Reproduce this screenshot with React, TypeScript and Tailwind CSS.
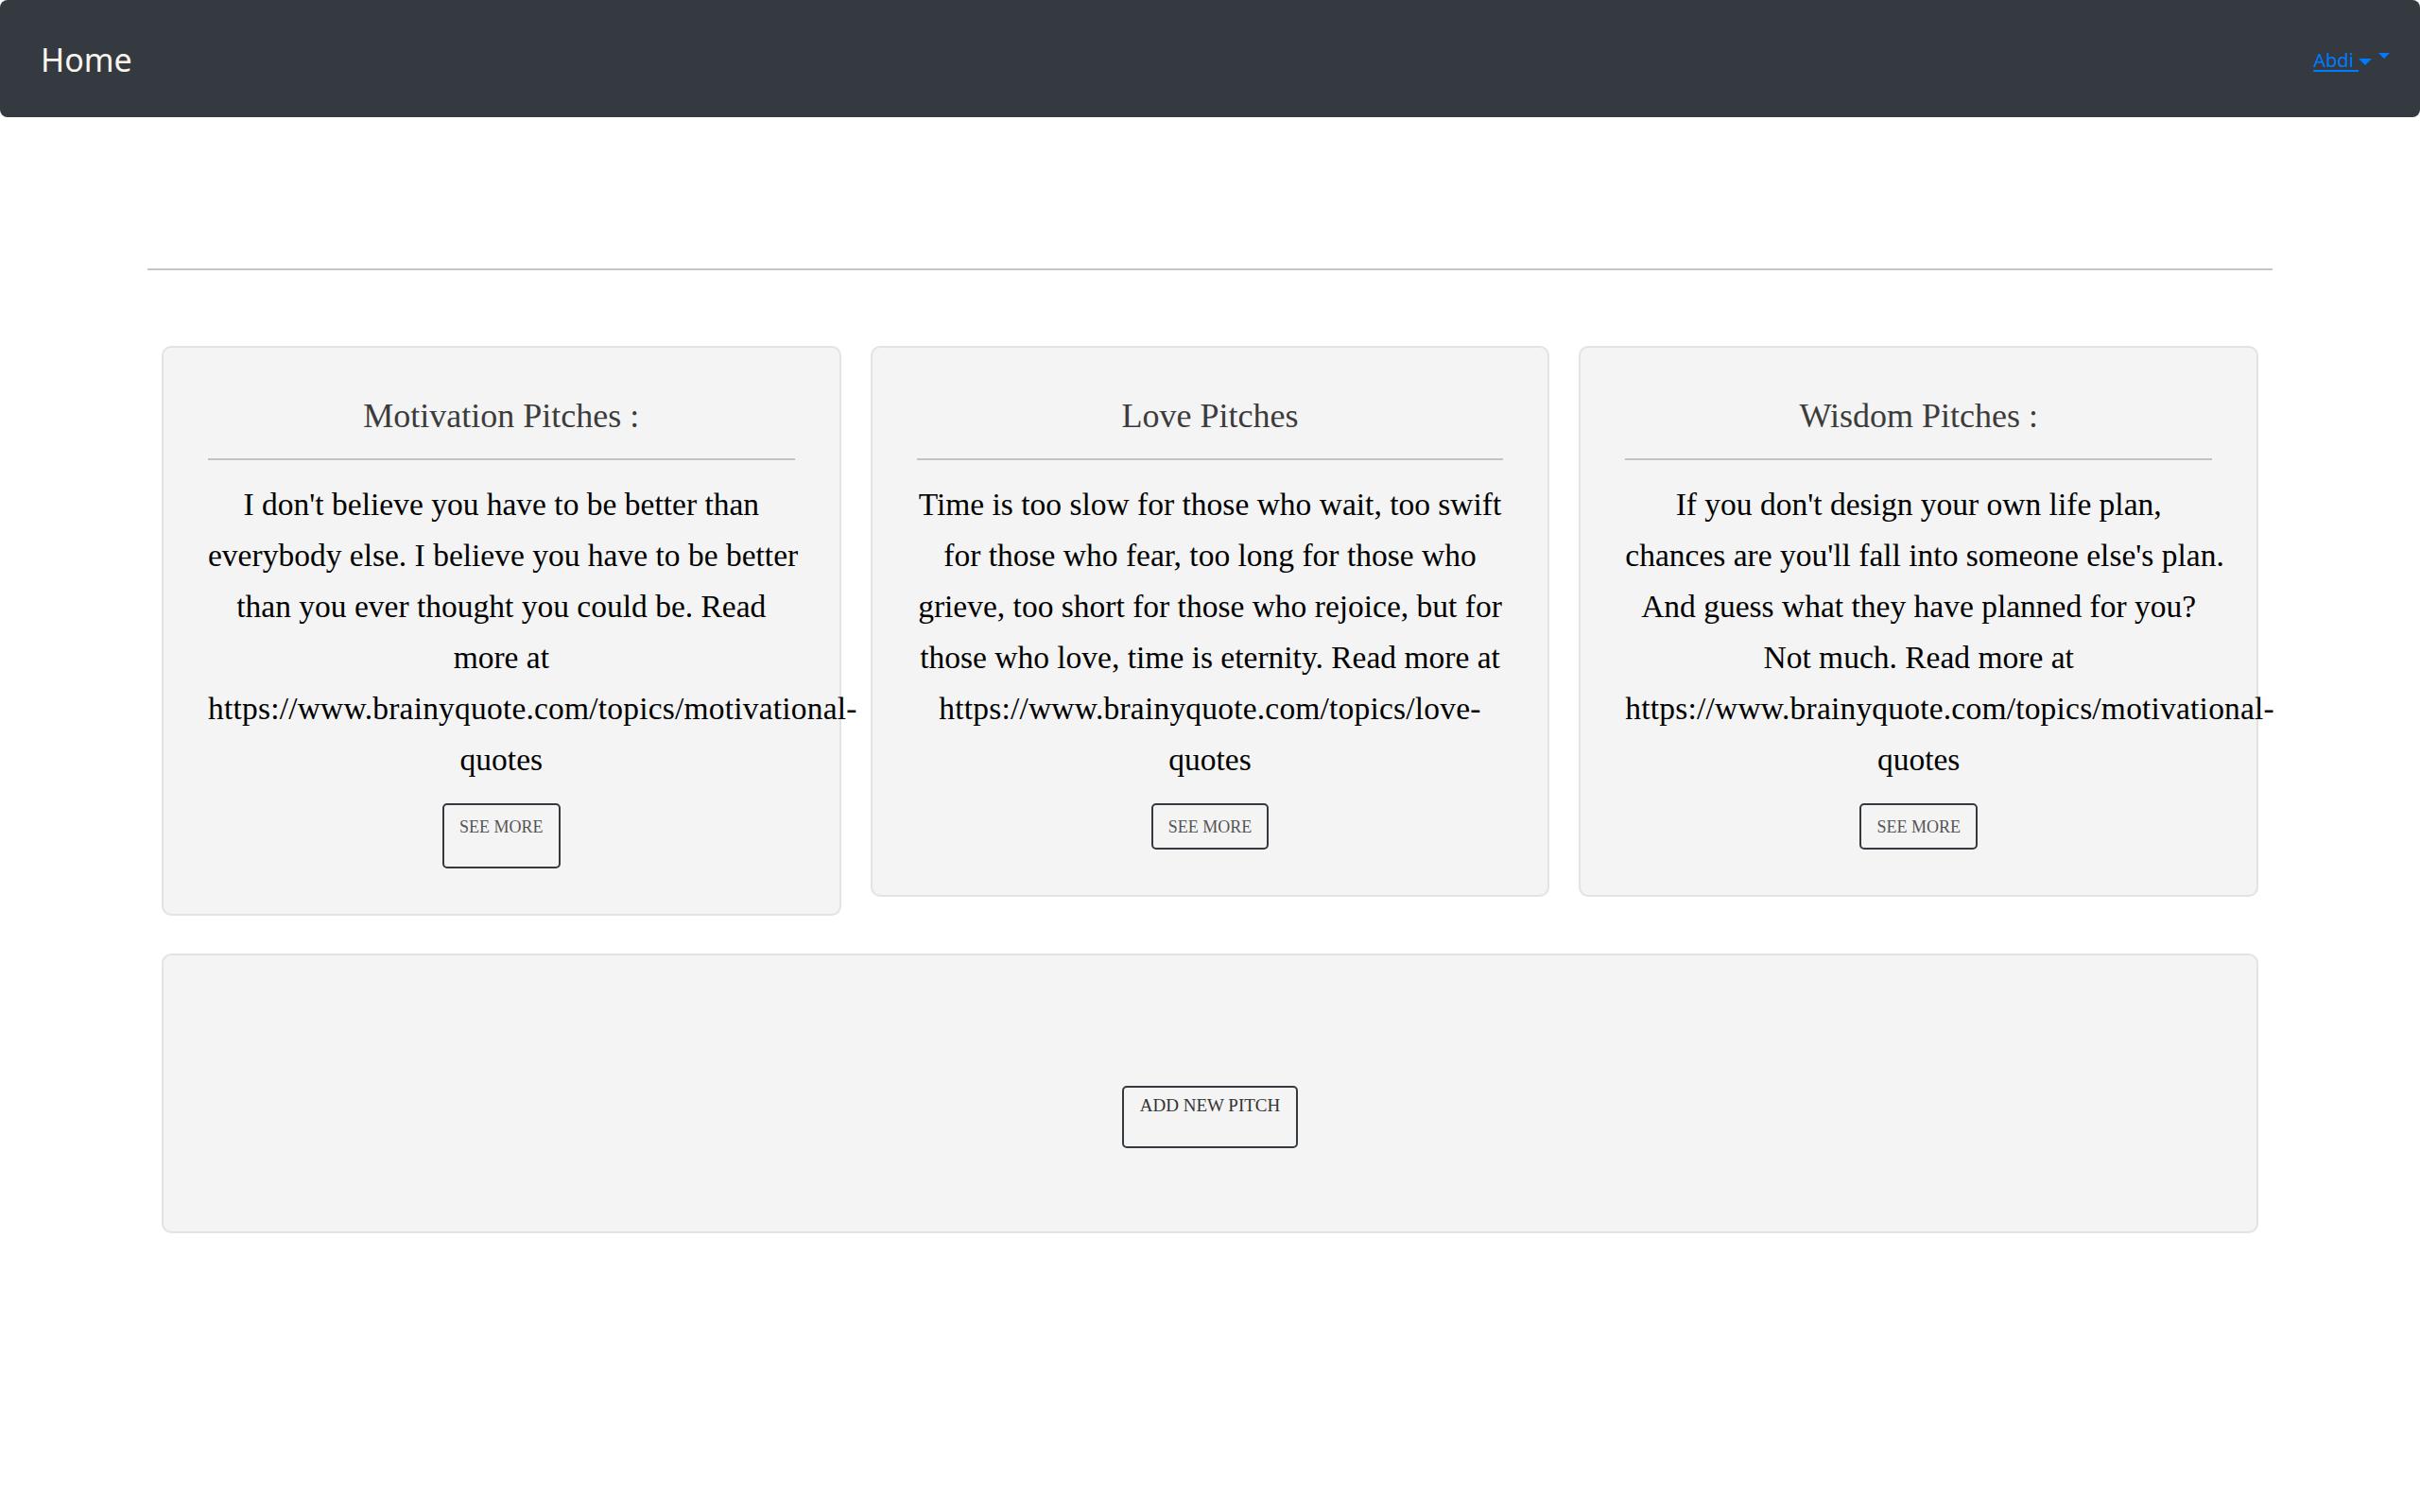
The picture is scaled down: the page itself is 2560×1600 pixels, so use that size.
import React from 'react';

type Pitch = {
    title: string;
    lines: string[];
    tallButton?: boolean;
};

const pitches: Pitch[] = [
    {
        title: 'Motivation Pitches :',
        lines: [
            "I don't believe you have to be better than",
            'everybody else. I believe you have to be better',
            'than you ever thought you could be. Read',
            'more at',
            'https://www.brainyquote.com/topics/motivational-',
            'quotes',
        ],
        tallButton: true,
    },
    {
        title: 'Love Pitches',
        lines: [
            'Time is too slow for those who wait, too swift',
            'for those who fear, too long for those who',
            'grieve, too short for those who rejoice, but for',
            'those who love, time is eternity. Read more at',
            'https://www.brainyquote.com/topics/love-',
            'quotes',
        ],
    },
    {
        title: 'Wisdom Pitches :',
        lines: [
            "If you don't design your own life plan,",
            "chances are you'll fall into someone else's plan.",
            'And guess what they have planned for you?',
            'Not much. Read more at',
            'https://www.brainyquote.com/topics/motivational-',
            'quotes',
        ],
    },
];

/* ─── Navbar ─── */

const Navbar: React.FC = () => (
    <nav className="h-[124px] bg-[#343a40] rounded-[8px] flex items-center justify-between pl-[43px] pr-[32px] font-['Noto_Sans',sans-serif]">
        <span className="text-[34px] text-[#faf6ee] leading-none pt-[2px]">Home</span>
        <div className="flex items-center pt-[4px]">
            <a className="text-[20px] text-[#007bff] underline underline-offset-[3px] leading-none flex items-center">
                Abdi&nbsp;
                <span className="inline-block w-0 h-0 border-t-[7px] border-x-[7px] border-x-transparent border-t-[#007bff] mt-[3px]" />
            </a>
            <span className="inline-block w-0 h-0 border-t-[6px] border-x-[6px] border-x-transparent border-t-[#007bff] ml-[7px] mb-[10px]" />
        </div>
    </nav>
);

/* ─── Pitch card ─── */

const PitchCard: React.FC<{ pitch: Pitch }> = ({ pitch }) => (
    <div className="bg-[#f4f4f4] border-2 border-[#e3e3e3] rounded-[10px] px-[47px] pt-[48px] pb-[48px] flex flex-col items-center">
        <h3 className="text-[36px] leading-[48px] text-[#3c3c3c] text-center">{pitch.title}</h3>
        <div className="w-full h-[2px] bg-[#c2c2c2] mt-[21px]" />
        <div className="w-full mt-[20px] text-[33.5px] leading-[54px] text-black text-center">
            {pitch.lines.map((line) => (
                <div
                    key={line}
                    className={`whitespace-nowrap ${line.startsWith('https') ? 'tracking-[0.2px]' : ''}`}
                >
                    {line}
                </div>
            ))}
        </div>
        <button
            className={`mt-[19px] border-2 border-[#343a40] rounded-[5px] px-[16px] pt-[11px] text-[18px] leading-[24px] text-[#555] ${pitch.tallButton ? 'pb-[30px]' : 'pb-[10px]'}`}
        >
            SEE MORE
        </button>
    </div>
);

/* ─── Page ─── */

export default function App() {
    return (
        <div className="min-h-screen bg-white font-['Liberation_Serif',serif]">
            <Navbar />
            <main className="px-[156px]">
                <hr className="mt-[160px] border-0 h-[2px] bg-[#c6c6c6]" />
                <div className="px-[15px] pt-[80px]">
                    <div className="grid grid-cols-3 gap-[31px] items-start">
                        {pitches.map((p) => (
                            <PitchCard key={p.title} pitch={p} />
                        ))}
                    </div>
                    <div className="mt-[40px] bg-[#f4f4f4] border-2 border-[#e3e3e3] rounded-[10px] h-[296px] flex justify-center pt-[138px]">
                        <button className="self-start border-2 border-[#343a40] rounded-[5px] px-[17px] pt-[7px] pb-[31px] text-[19px] leading-[24px] text-[#333]">
                            ADD NEW PITCH
                        </button>
                    </div>
                </div>
            </main>
        </div>
    );
}
